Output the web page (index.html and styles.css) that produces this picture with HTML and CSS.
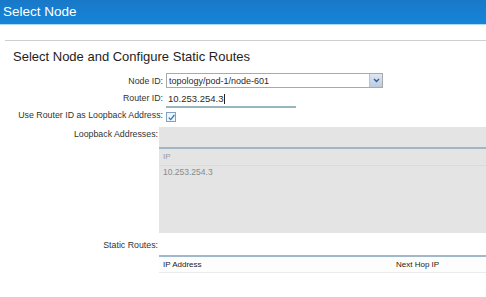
FILE: index.html
```html
<!DOCTYPE html>
<html lang="en">

<head>
    <meta charset="UTF-8">
    <meta name="viewport" content="width=device-width, initial-scale=1.0">
    <title>Select Node</title>
    <link rel="stylesheet" href="styles.css">
</head>

<body>
    <div class="titlebar">Select Node</div>

    <div class="dialog">
        <h2 class="section-title">Select Node and Configure Static Routes</h2>

        <div class="form">
            <label class="field-label">Node ID:</label>
            <div class="select">
                <span class="select-value">topology/pod-1/node-601</span>
                <span class="select-arrow">
                    <svg width="7" height="5" viewBox="0 0 7 5">
                        <path d="M1 1 L3.5 3.5 L6 1" fill="none" stroke="#2b5d9a" stroke-width="1.4"/>
                    </svg>
                </span>
            </div>

            <label class="field-label">Router ID:</label>
            <div class="text-input">10.253.254.3<span class="caret"></span></div>

            <label class="field-label">Use Router ID as Loopback Address:</label>
            <span class="checkbox">
                <svg width="9" height="9" viewBox="0 0 9 9">
                    <path d="M1.8 4.6 L3.7 6.6 L7.4 2" fill="none" stroke="#2a72b4" stroke-width="1.2"/>
                </svg>
            </span>

            <label class="field-label top loopback">Loopback Addresses:</label>
            <div class="panel">
                <div class="grid-head">IP</div>
                <div class="grid-row">10.253.254.3</div>
            </div>

            <label class="field-label top routes">Static Routes:</label>
            <div class="routes-table">
                <div class="table-head">
                    <span class="col-ip">IP Address</span>
                    <span class="col-hop">Next Hop IP</span>
                </div>
            </div>
        </div>
    </div>
</body>

</html>
```

FILE: styles.css
```css
body {
    margin: 0;
    padding: 0;
    overflow: hidden;
    background: #fff;
    font-family: "Liberation Sans", Arial, sans-serif;
    color: #2a2a2a;
}

.titlebar {
    height: 24px;
    line-height: 24px;
    padding-left: 3px;
    font-size: 13.5px;
    color: #fff;
    background: linear-gradient(#1978c8, #1585d9);
    border-bottom: 1px solid #a9dbf3;
}

.dialog {
    margin: 15px 0 0 5px;
    border-top: 1px solid #cfcfcf;
    padding-top: 8px;
}

.section-title {
    margin: 0 0 0 8px;
    font-size: 13px;
    font-weight: normal;
    line-height: 16px;
    color: #1e1e1e;
}

.form {
    margin-top: 8px;
    display: grid;
    grid-template-columns: 158px 1fr;
    column-gap: 3px;
    align-items: center;
}

.field-label {
    text-align: right;
    font-size: 8.8px;
    line-height: 14px;
    color: #333;
    white-space: nowrap;
}

.field-label.top {
    align-self: start;
    padding-right: 5px;
}

.field-label.loopback {
    margin-top: 5px;
}

.field-label.routes {
    margin-top: 5px;
}

/* Node ID dropdown */
.select {
    width: 215px;
    height: 13px;
    border: 1px solid #a9a9a9;
    display: flex;
    align-items: center;
    justify-content: space-between;
    background: #fff;
}

.select-value {
    font-size: 9px;
    padding-left: 2px;
}

.select-arrow {
    width: 12px;
    height: 13px;
    display: flex;
    align-items: center;
    justify-content: center;
    background: linear-gradient(#dfe7f2, #bccbe0);
    border-left: 1px solid #b7c3d4;
}

/* Router ID input */
.text-input {
    margin-top: 3px;
    width: 128px;
    height: 15px;
    line-height: 15px;
    padding-left: 2px;
    font-size: 9.5px;
    border-bottom: 2px solid #98b6be;
    display: flex;
    align-items: center;
}

.caret {
    width: 1px;
    height: 10px;
    margin-left: 1px;
    background: #222;
}

.checkbox {
    margin-top: 4px;
    width: 8px;
    height: 8px;
    border: 1px solid #7ea3c4;
    background: #eef5fb;
    display: flex;
    align-items: center;
    justify-content: center;
}

.checkbox svg {
    flex: none;
}

/* Loopback addresses grid */
.panel {
    margin: 5px 0 0 -7px;
    height: 106px;
    padding-top: 20px;
    box-sizing: border-box;
    background: #e4e4e4;
}

.grid-head {
    height: 16px;
    line-height: 16px;
    padding-left: 4px;
    font-size: 8px;
    color: #9a9a9a;
    border-top: 2px solid #a2b6c6;
    border-bottom: 1px solid #dadada;
}

.grid-row {
    padding-left: 4px;
    font-size: 8.5px;
    line-height: 13px;
    color: #8a8a8a;
}

/* Static routes table */
.routes-table {
    margin-left: -7px;
    padding-top: 22px;
    background: linear-gradient(#fff 70%, #eef4f8);
}

.table-head {
    display: flex;
    height: 15px;
    line-height: 15px;
    font-size: 8px;
    color: #222;
    background: #fdfdfd;
    border-top: 2px solid #9fb8ca;
    border-bottom: 1px solid #ebebeb;
}

.col-ip {
    width: 233px;
    padding-left: 4px;
}
```
